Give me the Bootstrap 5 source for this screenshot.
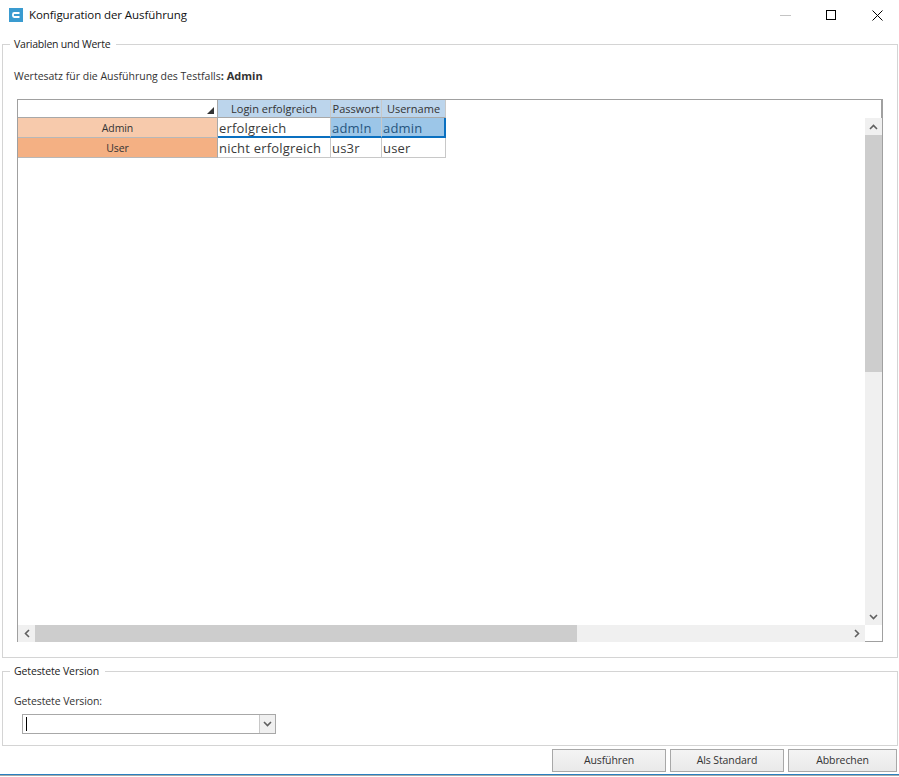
<!DOCTYPE html>
<html lang="de">
<head>
<meta charset="utf-8">
<title>Konfiguration der Ausführung</title>
<link href="https://cdn.jsdelivr.net/npm/bootstrap@5.3.0/dist/css/bootstrap.min.css" rel="stylesheet">
<style>
html,body{height:777px;overflow:hidden}
body{width:899px;background:#fff;color:#333;font:10.5px/14px "Open Sans",sans-serif;letter-spacing:-.1px}
.win-shell{height:775px;border-bottom:1px solid #2a80c0;box-shadow:0 1px 0 #a8a8a8}
.title-row{height:30px;padding-left:9px}
.app-logo{width:14px;height:14px;margin-right:6px}
.title-text{font-size:11.5px;color:#111;letter-spacing:-.08px}
.win-btns{margin-right:-1px}
.win-btn{width:46px;height:30px}
.group-box{margin:0 1px 0 2px;border:1px solid #d4d4d4;padding:0;min-width:0}
.group-box legend{float:none;width:auto;font-size:10.5px;line-height:14px;margin:0 0 0 -4px;padding:0 6px 0 4px;color:#222;letter-spacing:-.12px}
.group-main{height:621px;margin-top:7px;padding:0 14px 0 11px}
.group-main legend{letter-spacing:-.22px}
.group-sub{height:82px;margin-top:6px;padding:0 14px 0 11px}
.lead-text{margin-top:18px;margin-bottom:16px;height:14px;letter-spacing:0}
.lead-text b{font-size:11px}
.grid-frame{width:866px;height:543px;margin-left:3px;border:1px solid #a0a0a0;display:grid;grid-template-columns:847px 17px;grid-template-rows:525px 17px}
.sheet{table-layout:fixed;border-collapse:separate;border-spacing:0;width:428px;color:#333}
.sheet th,.sheet td{padding:0;border-right:1px solid #c8c8c8;border-bottom:1px solid #c8c8c8;font-weight:400;overflow:hidden;white-space:nowrap}
.sheet thead th{height:18px;background:#bcd5ec;text-align:center;font-size:11px;line-height:16px;border-bottom-color:#a8a8a8;letter-spacing:0}
.sheet th.corner{background:#fff;border-right-color:#a8a8a8;position:relative}
.corner-mark{position:absolute;right:3px;bottom:3px;width:0;height:0;border-left:7px solid transparent;border-bottom:7px solid #333}
.sheet tbody th{height:20px;text-align:center;font-size:10.5px;line-height:18px;border-right-color:#a8a8a8;border-bottom-color:#b8b8b8}
.row-admin{background:#f7caac}
.row-user{background:#f4b083}
.sheet td{font-size:13px;line-height:18px;padding:1px 0 0 1px;color:#3a3a3a;letter-spacing:.2px}
.sheet tr.active-row td{border-bottom:2px solid #0a70c0;line-height:16px;padding-top:2px}
.sheet td.sel{background:#9cc6e8;color:#26557f}
.sheet td.end-sel{border-right:2px solid #0a70c0}
.v-bar{display:flex;flex-direction:column}
.bar-cap{height:18px;flex:none;border-right:1px solid #a0a0a0}
.bar-btn{display:flex;align-items:center;justify-content:center;width:17px;height:17px;background:#f0f0f0;flex:none}
.v-thumb{height:237px;background:#cdcdcd;flex:none}
.v-track{flex:1;background:#f0f0f0}
.h-bar{display:flex;height:17px}
.h-thumb{width:542px;background:#cdcdcd}
.h-track{flex:1;background:#f0f0f0}
.sub-label{margin-top:16px;height:14px}
.combo{width:254px;height:20px;border:1px solid #a8a8a8;margin-left:8px;margin-top:6px}
.caret-line{width:1px;height:14px;background:#000;margin:2px 0 0 3px}
.combo-btn{width:16px;background:#f0f0f0;border-left:1px solid #c8c8c8;margin-left:auto}
.action-row{margin:3px 2px 0 0;gap:4px}
.act-btn{width:114px;height:23px;border:1px solid #a8a8a8;border-radius:0;padding:0 0 2px;background:linear-gradient(#f4f4f4,#e9e9e9);color:#333;font-size:10.5px;line-height:18px;letter-spacing:-.1px}
.act-btn.wide-end{width:109px}
</style>
</head>
<body>
<div class="win-shell d-flex flex-column">
  <div class="title-row d-flex align-items-center">
    <svg class="app-logo" viewBox="0 0 14 14"><rect width="14" height="14" fill="#3a9bd0"/><path d="M10.5 5H5.2Q4 5 4 6.2v1.6Q4 9 5.2 9h5.3" fill="none" stroke="#fff" stroke-width="1.8"/></svg>
    <span class="title-text">Konfiguration der Ausführung</span>
    <div class="win-btns d-flex ms-auto">
      <div class="win-btn d-flex align-items-center justify-content-center"><svg width="11" height="11" viewBox="0 0 11 11"><path d="M0 5.5h11" stroke="#c4c4c4"/></svg></div>
      <div class="win-btn d-flex align-items-center justify-content-center"><svg width="11" height="11" viewBox="0 0 11 11"><rect x=".5" y=".5" width="9" height="9" fill="none" stroke="#000"/></svg></div>
      <div class="win-btn d-flex align-items-center justify-content-center"><svg width="11" height="11" viewBox="0 0 11 11"><path d="M.5.5l10 10M10.5.5l-10 10" stroke="#000"/></svg></div>
    </div>
  </div>
  <fieldset class="group-box group-main">
    <legend>Variablen und Werte</legend>
    <div class="lead-text">Wertesatz für die Ausführung des Testfalls<b>: Admin</b></div>
    <div class="grid-frame">
      <div class="grid-body">
        <table class="sheet">
          <colgroup><col style="width:200px"><col style="width:113px"><col style="width:51px"><col style="width:64px"></colgroup>
          <thead><tr><th class="corner"><span class="corner-mark"></span></th><th>Login erfolgreich</th><th>Passwort</th><th>Username</th></tr></thead>
          <tbody>
            <tr class="active-row"><th class="row-admin">Admin</th><td>erfolgreich</td><td class="sel">adm!n</td><td class="sel end-sel">admin</td></tr>
            <tr><th class="row-user">User</th><td>nicht erfolgreich</td><td>us3r</td><td>user</td></tr>
          </tbody>
        </table>
      </div>
      <div class="v-bar">
        <div class="bar-cap"></div>
        <div class="bar-btn"><svg width="9" height="6" viewBox="0 0 9 6"><path d="M1 5l3.5-3.5L8 5" fill="none" stroke="#606060" stroke-width="1.6"/></svg></div>
        <div class="v-thumb"></div>
        <div class="v-track"></div>
        <div class="bar-btn"><svg width="9" height="6" viewBox="0 0 9 6"><path d="M1 1l3.5 3.5L8 1" fill="none" stroke="#606060" stroke-width="1.6"/></svg></div>
      </div>
      <div class="h-bar">
        <div class="bar-btn"><svg width="6" height="9" viewBox="0 0 6 9"><path d="M5 1L1.5 4.5 5 8" fill="none" stroke="#606060" stroke-width="1.6"/></svg></div>
        <div class="h-thumb"></div>
        <div class="h-track"></div>
        <div class="bar-btn"><svg width="6" height="9" viewBox="0 0 6 9"><path d="M1 1l3.5 3.5L1 8" fill="none" stroke="#606060" stroke-width="1.6"/></svg></div>
      </div>
      <div></div>
    </div>
  </fieldset>
  <fieldset class="group-box group-sub">
    <legend>Getestete Version</legend>
    <div class="sub-label">Getestete Version:</div>
    <div class="combo d-flex">
      <div class="caret-line"></div>
      <div class="combo-btn d-flex align-items-center justify-content-center"><svg width="9" height="6" viewBox="0 0 9 6"><path d="M1 1l3.5 3.5L8 1" fill="none" stroke="#606060" stroke-width="1.6"/></svg></div>
    </div>
  </fieldset>
  <div class="action-row d-flex justify-content-end">
    <button type="button" class="btn act-btn">Ausführen</button>
    <button type="button" class="btn act-btn">Als Standard</button>
    <button type="button" class="btn act-btn wide-end">Abbrechen</button>
  </div>
</div>
</body>
</html>
